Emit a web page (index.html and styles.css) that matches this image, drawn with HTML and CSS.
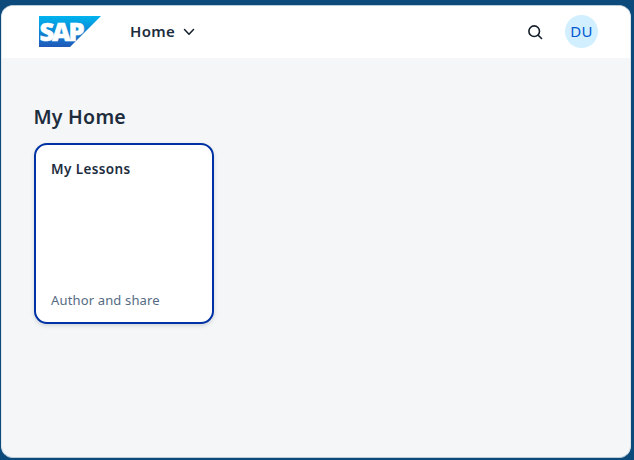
FILE: index.html
```html
<!DOCTYPE html>
<html lang="en">
<head>
<meta charset="utf-8">
<title>My Home</title>
<link rel="stylesheet" href="styles.css">
</head>
<body>
<div class="window">
  <header class="shell">
    <svg class="logo" width="62" height="31" viewBox="0 0 62 31" role="img" aria-label="SAP">
      <defs><linearGradient id="sky" x1="0" y1="0" x2="0" y2="1"><stop offset="0" stop-color="#00b4ef"/><stop offset=".5" stop-color="#0d87d3"/><stop offset="1" stop-color="#2058b8"/></linearGradient></defs>
      <path d="M0 0H62L31 31H0Z" fill="url(#sky)"/>
      <text class="logo-text" x="0.500" y="24.500" textLength="45" lengthAdjust="spacing">SAP</text>
    </svg>
    <button class="menu"><span>Home</span>
      <svg class="chevron" width="12" height="8" viewBox="0 0 12 8"><path d="M1.500 1.500 6 6.200l4.500-4.700" fill="none" stroke="#131e29" stroke-width="1.500" stroke-linecap="round" stroke-linejoin="round"/></svg>
    </button>
    <button class="search" aria-label="Search">
      <svg width="16" height="16" viewBox="0 0 16 16"><g fill="none" stroke="#131e29" stroke-width="1.600" stroke-linecap="round"><circle cx="7.200" cy="7.200" r="5.300"/><path d="m11.200 11.200 3.300 3.300"/></g></svg>
    </button>
    <span class="avatar">DU</span>
  </header>
  <main class="content">
    <h1>My Home</h1>
    <article class="tile">
      <h2>My Lessons</h2>
      <p>Author and share</p>
    </article>
  </main>
</div>
</body>
</html>
```
FILE: styles.css
```css
* { box-sizing: border-box; }
body {
  margin: 0;
  height: 460px;
  padding: 5px 3px 2px 1px;
  background: #0c4a7b;
  color: #1d2d3e;
  font-family: "Noto Sans", sans-serif;
  overflow: hidden;
}
.window {
  height: 453px;
  border: 1px solid #bccbd8;
  border-left-color: #dfe6ec;
  border-right-color: #dfe6ec;
  border-radius: 12px;
  background: #f5f6f7;
  overflow: hidden;
}
.shell {
  display: flex;
  align-items: center;
  height: 52px;
  padding: 0 32px 2px 37px;
  background: #fff;
}
.logo {
  flex: none;
  overflow: visible;
}
.logo-text {
  font: 800 25.500px "Open Sans", sans-serif;
  fill: #fff;
  stroke: #fff;
  stroke-width: .5px;
}
button {
  display: flex;
  align-items: center;
  padding: 0;
  border: 0;
  background: none;
  color: inherit;
  font: inherit;
}
.menu {
  gap: 8px;
  margin-left: 29px;
  font-size: 15px;
  font-weight: 600;
  letter-spacing: .3px;
  line-height: 20px;
}
.chevron { margin-top: 2px; }
.search {
  margin-left: auto;
  padding-top: 1px;
}
.avatar {
  display: flex;
  align-items: center;
  justify-content: center;
  width: 33px;
  height: 33px;
  margin-left: 22px;
  border-radius: 50%;
  background: #d1efff;
  color: #0057d2;
  font-size: 15px;
  letter-spacing: .3px;
}
.content { padding: 46px 32px; }
h1 {
  margin: 0 0 0 -.5px;
  font-size: 19.500px;
  font-weight: 600;
  line-height: 26px;
  letter-spacing: .25px;
}
.tile {
  display: flex;
  flex-direction: column;
  justify-content: space-between;
  width: 180px;
  height: 181px;
  margin-top: 13px;
  padding: 15px 15px 13px;
  border: 2px solid #0032a5;
  border-radius: 13px;
  background: #fff;
  box-shadow: 0 2px 4px rgba(34, 53, 72, .16);
}
h2 {
  margin: 0;
  font-size: 13.500px;
  font-weight: 600;
  line-height: 18px;
  letter-spacing: .4px;
}
p {
  margin: 0;
  color: #556b82;
  font-size: 13px;
  line-height: 18px;
  letter-spacing: .15px;
}
```
